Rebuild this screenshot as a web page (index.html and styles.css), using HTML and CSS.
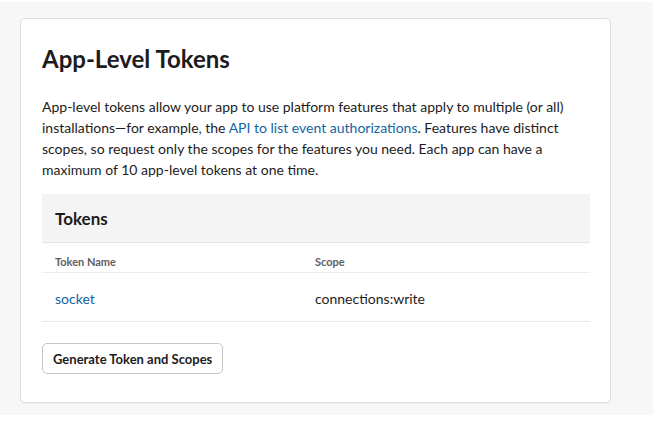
FILE: index.html
```html
<!DOCTYPE html>
<html>
<head>
<meta charset="utf-8">
<link rel="stylesheet" href="styles.css">
</head>
<body>
<div class="page">
  <section class="card">
    <h1 class="title">App-Level Tokens</h1>
    <p class="desc">App-level tokens allow your app to use platform features that apply to multiple (or all) installations—for example, the <a class="link" href="#">API to list event authorizations</a>. Features have distinct scopes, so request only the scopes for the features you need. Each app can have a maximum of 10 app-level tokens at one time.</p>
    <div class="tokens">
      <div class="tokens-head">Tokens</div>
      <div class="row row-head">
        <div class="col-name">Token Name</div>
        <div class="col-scope">Scope</div>
      </div>
      <div class="row row-body">
        <div class="col-name"><a class="link" href="#">socket</a></div>
        <div class="col-scope">connections:write</div>
      </div>
    </div>
    <button class="btn">Generate Token and Scopes</button>
  </section>
</div>
</body>
</html>
```
FILE: styles.css
```css
html, body {
  margin: 0;
  padding: 0;
}
body {
  background: #ffffff;
  font-family: Lato, "Liberation Sans", sans-serif;
  color: #1d1c1d;
}
.page {
  margin-top: 2px;
  width: 653px;
  height: 413px;
  box-sizing: border-box;
  background: #f7f7f7;
  padding: 16px 0 0 20px;
}
.card {
  background: #fff;
  border: 1px solid #dedede;
  border-radius: 5px;
  box-shadow: 0 1px 1px rgba(0, 0, 0, 0.03);
  padding: 24px 20px 27px 21px;
  box-sizing: border-box;
  width: 591px;
  height: 385px;
}
.title {
  margin: 0;
  font-size: 24px;
  line-height: 32px;
  font-weight: 700;
}
.desc {
  margin: 21px 0 0;
  font-size: 14px;
  line-height: 21px;
  color: #1d1c1d;
}
.link {
  color: #1264a3;
  text-decoration: none;
}
.tokens {
  margin-top: 14px;
  border-bottom: 1px solid #e8e8e8;
}
.tokens-head {
  background: #f4f4f4;
  border-bottom: 1px solid #e4e4e4;
  height: 48px;
  padding: 0 13px;
  display: flex;
  align-items: center;
  font-size: 17px;
  font-weight: 700;
}
.row {
  display: flex;
  padding: 0 13px;
  align-items: center;
}
.row-head {
  padding-top: 11px;
  padding-bottom: 3px;
  line-height: 15px;
  font-size: 11px;
  font-weight: 700;
  color: #616061;
  border-bottom: 1px solid #ececec;
}
.row-body {
  height: 48px;
  padding-top: 3px;
  box-sizing: border-box;
  font-size: 14px;
}
.col-name {
  width: 260px;
}
.btn {
  margin-top: 21px;
  height: 31px;
  padding: 0 10px;
  background: #fff;
  border: 1px solid #c6c6c6;
  border-radius: 5px;
  font-family: Lato, "Liberation Sans", sans-serif;
  font-size: 13px;
  font-weight: 700;
  color: #1d1c1d;
}
```
